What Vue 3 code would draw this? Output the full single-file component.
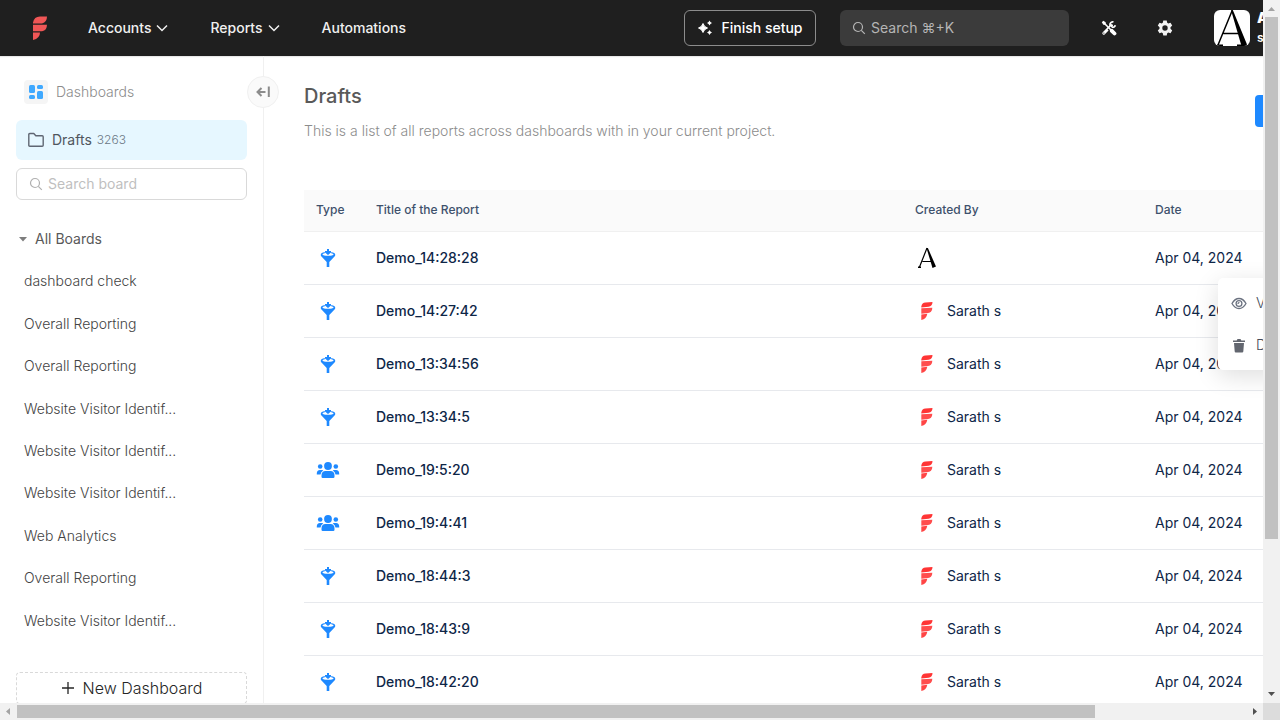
<script setup>
const boards = [
  'dashboard check',
  'Overall Reporting',
  'Overall Reporting',
  'Website Visitor Identif...',
  'Website Visitor Identif...',
  'Website Visitor Identif...',
  'Web Analytics',
  'Overall Reporting',
  'Website Visitor Identif...',
]

const reports = [
  { title: 'Demo_14:28:28', type: 'funnel', author: '' },
  { title: 'Demo_14:27:42', type: 'funnel', author: 'Sarath s' },
  { title: 'Demo_13:34:56', type: 'funnel', author: 'Sarath s' },
  { title: 'Demo_13:34:5', type: 'funnel', author: 'Sarath s' },
  { title: 'Demo_19:5:20', type: 'users', author: 'Sarath s' },
  { title: 'Demo_19:4:41', type: 'users', author: 'Sarath s' },
  { title: 'Demo_18:44:3', type: 'funnel', author: 'Sarath s' },
  { title: 'Demo_18:43:9', type: 'funnel', author: 'Sarath s' },
  { title: 'Demo_18:42:20', type: 'funnel', author: 'Sarath s' },
]
</script>

<template>
  <div class="window">
    <div class="viewport">
      <div class="page">
        <header class="topbar">
          <a class="brand" href="#" aria-label="Home">
            <svg width="14" height="24" viewBox="0 0 14 24" fill="#f05656">
              <path d="M0 7.500V6.500Q1 .5 7 .5h7q0 5.500-5 7z" />
              <path d="M0 8.700h14q0 5.500-5 6.600H0z" />
              <path d="M0 16.500h7q0 6-7 7.500z" />
            </svg>
          </a>
          <nav class="nav">
            <button class="nav-item" type="button">
              Accounts
              <svg width="12" height="12" viewBox="0 0 12 12" fill="none" stroke="currentColor" stroke-width="1.500"><path d="M1 3.500 6 8.500 11 3.500" /></svg>
            </button>
            <button class="nav-item" type="button">
              Reports
              <svg width="12" height="12" viewBox="0 0 12 12" fill="none" stroke="currentColor" stroke-width="1.500"><path d="M1 3.500 6 8.500 11 3.500" /></svg>
            </button>
            <a class="nav-item" href="#">Automations</a>
          </nav>
          <div class="tools">
            <button class="setup" type="button">
              <svg width="16" height="16" viewBox="0 0 16 16" fill="#fff">
                <path d="M6 3.500Q7 7 10.500 8 7 9 6 12.500 5 9 1.500 8 5 7 6 3.500z" stroke="#fff" stroke-linejoin="round" />
                <path d="M12.500.5q.6 1.900 2.500 2.500-1.900.6-2.500 2.500-.6-1.900-2.500-2.500 1.900-.6 2.500-2.500zM12.500 10q.6 1.900 2.500 2.500-1.900.6-2.500 2.500-.6-1.900-2.500-2.500 1.900-.6 2.500-2.500z" />
              </svg>
              Finish setup
            </button>
            <button class="global-search" type="button">
              <svg width="14" height="14" viewBox="0 0 14 14" fill="none" stroke="currentColor" stroke-width="1.200"><circle cx="6" cy="6" r="4.500" /><path d="m9.300 9.300 3.500 3.500" /></svg>
              Search ⌘+K
            </button>
            <button class="icon-btn" type="button" aria-label="Tools">
              <svg width="16" height="16" viewBox="0 0 16 16" fill="none" stroke="#fff">
                <path d="M2.800 13.200 10.500 5.500" stroke-width="3" stroke-linecap="round" />
                <path d="M12.500 2a2.700 2.700 0 1 0 1.800 3.300" stroke-width="1.800" />
                <path d="m2.500 2.500 6.500 6.500" stroke-width="1.600" />
                <path d="M.8 2.300 2.300.8 4.700 2.300v2.400H2.300z" fill="#fff" stroke="none" />
                <path d="m8.300 11.300 3-3" stroke="#1f1f1f" stroke-width="5" />
                <path d="m7 7 3.500 3.500" stroke-width="1.600" />
                <path d="m10.800 10.800 2.700 2.700" stroke-width="3.800" stroke-linecap="round" />
                <circle cx="2.900" cy="13.100" r=".6" fill="#1f1f1f" stroke="none" />
              </svg>
            </button>
            <button class="icon-btn" type="button" aria-label="Settings">
              <svg width="16" height="16" viewBox="0 0 16 16">
                <path fill="#f2f2f2" fill-rule="evenodd" d="M6.300.5h3.400l.5 2.200 1.100.7 2.200-.7 1.700 2.900-1.700 1.600v1.600l1.700 1.600-1.700 2.900-2.200-.7-1.100.7-.5 2.200H6.300l-.5-2.200-1.100-.7-2.200.7-1.700-2.900 1.700-1.600V7.200L.8 5.600l1.700-2.900 2.200.7 1.100-.7zM8 5.300a2.700 2.700 0 1 0 0 5.400 2.700 2.700 0 0 0 0-5.400z" />
              </svg>
            </button>
            <div class="account">
              <span class="avatar">
                <svg width="36" height="36" viewBox="0 0 36 36">
                  <path d="M18 1 4 35M9.500 23.500h17" fill="none" stroke="#000" stroke-width="1.500" />
                  <path d="M17 0h1.800L33 34.500 29 36h-1.500z" />
                  <path d="M3 34.500h6V36H3zM23 34.500h10V36H23z" />
                </svg>
              </span>
              <span class="account-text"><strong>A</strong><span>s</span></span>
            </div>
          </div>
        </header>

        <div class="body">
          <aside class="sidebar">
            <button class="collapse" type="button" aria-label="Collapse sidebar">
              <svg width="16" height="16" viewBox="0 0 16 16" fill="none" stroke="#8c8c8c" stroke-width="2"><path d="M10.500 8H2.500M6.500 4 2.500 8l4 4M13.800 2.500v10.500" /></svg>
            </button>
            <div class="side-title">
              <span class="side-icon">
                <svg width="14" height="14" viewBox="0 0 14 14" fill="#40a9ff"><rect width="6" height="8" rx="1.500" /><rect y="10" width="6" height="4" rx="1.500" /><rect x="8" width="6" height="4" rx="1.500" /><rect x="8" y="6" width="6" height="8" rx="1.500" /></svg>
              </span>
              Dashboards
            </div>
            <a class="drafts-link" href="#">
              <svg width="16" height="16" viewBox="0 0 16 16" fill="none" stroke="#5f6673" stroke-width="1.400" stroke-linejoin="round"><path d="M.8 2.500q0-1 1-1h4l2 2.300h6.400q1 0 1 1v8.400q0 1-1 1H1.800q-1 0-1-1z" /></svg>
              Drafts
              <span class="count">3263</span>
            </a>
            <label class="board-search">
              <svg width="14" height="14" viewBox="0 0 14 14" fill="none" stroke="#b0b0b0" stroke-width="1.200"><circle cx="6" cy="6" r="4.500" /><path d="m9.300 9.300 3.500 3.500" /></svg>
              <input type="text" placeholder="Search board" aria-label="Search board" />
            </label>
            <button class="group" type="button">
              <svg width="8" height="5" viewBox="0 0 8 5" fill="#7d7d7d"><path d="M0 0h8L4 4.500z" /></svg>
              All Boards
            </button>
            <nav class="boards">
              <a v-for="(board, i) in boards" :key="i" href="#">{{ board }}</a>
            </nav>
            <button class="new-board" type="button">
              <svg width="14" height="14" viewBox="0 0 14 14" fill="none" stroke="#262626" stroke-width="1.300"><path d="M7 1v12M1 7h12" /></svg>
              New Dashboard
            </button>
          </aside>

          <main class="main">
            <div class="heading">
              <div>
                <h1>Drafts</h1>
                <p>This is a list of all reports across dashboards with in your current project.</p>
              </div>
              <button class="primary" type="button" aria-label="New report"></button>
            </div>
            <div class="table-wrap">
              <table>
                <colgroup>
                  <col class="col-type" />
                  <col />
                  <col class="col-author" />
                  <col class="col-date" />
                </colgroup>
                <thead>
                  <tr>
                    <th>Type</th>
                    <th>Title of the Report</th>
                    <th>Created By</th>
                    <th>Date</th>
                  </tr>
                </thead>
                <tbody>
                  <tr v-for="report in reports" :key="report.title">
                    <td>
                      <svg v-if="report.type === 'funnel'" width="24" height="24" viewBox="0 0 24 24" fill="#1e89ff">
                        <path d="M11 3h2v2h2v1.500L12 9 9 6.500V5h2z" />
                        <path d="M8.800 6Q4.800 6.600 4.800 8.500v.8q0 .7.700 1.300L10.700 16v5h2.600v-5l5.200-5.400q.7-.6.700-1.300v-.8q0-1.900-4-2.500v1.300q2.400.5 2.400 1.200Q17 9.800 12 9.800T6.400 8.500q0-.7 2.400-1.200z" />
                      </svg>
                      <svg v-else width="24" height="24" viewBox="0 0 24 24" fill="#1e89ff">
                        <circle cx="12" cy="8" r="3.900" /><circle cx="4.200" cy="8.500" r="2.300" /><circle cx="19.800" cy="8.500" r="2.300" />
                        <path d="M5.500 18.800v-1.300q0-4.500 4-4.500h5q4 0 4 4.500v1.300q0 1.200-1.200 1.200H6.700q-1.200 0-1.200-1.200zM.8 16.500v-1Q.8 12 4 12h2.200q.6 0 1 .5-2.400 1.500-2.700 4zM23.200 16.500v-1q0-3.500-3.200-3.500h-2.200q-.6 0-1 .5 2.400 1.500 2.700 4z" />
                      </svg>
                    </td>
                    <td class="title">{{ report.title }}</td>
                    <td>
                      <span class="author">
                        <svg v-if="report.author" width="24" height="24" viewBox="0 0 24 24">
                          <path fill="#ff3535" d="M6.300 8.500V7.500Q7 3.500 10.500 3.500L17.500 3q0 4-4 4.700z" />
                          <path fill="#ff4d4d" d="m6.300 9.300 11-.6q0 4.500-4.300 5.300l-6.700.8z" />
                          <path fill="#ff4545" d="m6.300 15.500 6-.8q-.8 5.300-6 6.300z" />
                        </svg>
                        <svg v-else width="24" height="24" viewBox="0 0 24 24">
                          <path d="M12 2 4.500 21M7.500 15.500h9" fill="none" stroke="#000" stroke-width="1.200" />
                          <path d="M11.500 2h1.400L21 20.500l-3.500 1.500z" />
                          <path d="M3 20.500h3V22H3z" />
                        </svg>
                        {{ report.author }}
                      </span>
                    </td>
                    <td>Apr 04, 2024</td>
                  </tr>
                </tbody>
              </table>
              <div class="menu">
                <button type="button">
                  <svg width="16" height="16" viewBox="0 0 16 16" fill="none" stroke="#6b7280" stroke-width="1.300"><path d="M1 8.500q2.800-5 7-5t7 5q-2.800 5-7 5t-7-5z" /><circle cx="8" cy="8.500" r="2.900" /><path d="M6.500 8.500Q8 8.500 8 7" /></svg>
                  View
                </button>
                <button type="button">
                  <svg width="16" height="16" viewBox="0 0 16 16" fill="#62666f"><path d="M2 3.500h3.700L6.500 2h3l.8 1.500H14V5H2zM3 6h10l-.7 8.500q-.1 1-1 1H4.700q-.9 0-1-1z" /></svg>
                  Delete
                </button>
              </div>
            </div>
          </main>
        </div>
      </div>
    </div>

    <div class="bar bar-y" aria-hidden="true">
      <svg width="17" height="17" viewBox="0 0 17 17" fill="#a3a3a3"><path d="M5 11h7L8.500 7z" /></svg>
      <div class="track"><div class="thumb"></div></div>
      <svg width="17" height="17" viewBox="0 0 17 17" fill="#505050"><path d="M5 6h7l-3.500 4z" /></svg>
    </div>
    <div class="bar bar-x" aria-hidden="true">
      <svg width="17" height="17" viewBox="0 0 17 17" fill="#a3a3a3"><path d="M10 5v7L6 8.500z" /></svg>
      <div class="track"><div class="thumb"></div></div>
      <svg width="17" height="17" viewBox="0 0 17 17" fill="#505050"><path d="M7 5v7l4-3.500z" /></svg>
    </div>
    <div class="corner"></div>
  </div>
</template>

<style>
body {
  margin: 0;
}
</style>

<style scoped>
* {
  box-sizing: border-box;
}
.window {
  display: grid;
  grid-template: minmax(0, 1fr) 17px / minmax(0, 1fr) 17px;
  height: 100vh;
  background: #fff;
  font-family: Inter, "Liberation Sans", sans-serif;
  font-size: 14px;
  line-height: 20px;
  color: #0e2647;
}
svg {
  display: block;
  flex: none;
}
button,
input {
  font: inherit;
  color: inherit;
  border: 0;
  background: none;
  padding: 0;
}
a {
  color: inherit;
  text-decoration: none;
}
.viewport {
  overflow: hidden;
}
.page {
  min-width: 1440px;
}

.topbar {
  display: flex;
  align-items: center;
  height: 56px;
  padding: 0 24px 0 33px;
  background: #1f1f1f;
  color: #f0f0f0;
  font-weight: 500;
  box-shadow: 0 1px 1px #e8e8e8;
}
.nav {
  display: flex;
  gap: 42px;
  margin-left: 41px;
}
.nav-item {
  display: flex;
  align-items: center;
  gap: 5px;
}
.tools {
  display: flex;
  align-items: center;
  margin-left: auto;
}
.setup {
  display: flex;
  align-items: center;
  justify-content: center;
  gap: 8px;
  width: 132px;
  height: 36px;
  border: 1px solid #8c8c8c;
  border-radius: 6px;
  color: #fff;
}
.global-search {
  display: flex;
  align-items: center;
  gap: 5px;
  width: 229px;
  height: 36px;
  margin: 0 32px 0 24px;
  padding: 0 12px;
  border-radius: 6px;
  background: #3b3b3b;
  color: #b5b5b5;
  font-weight: 400;
}
.icon-btn {
  margin-right: 40px;
}
.account {
  display: flex;
  align-items: center;
  gap: 7px;
  width: 202px;
  margin-left: 1px;
}
.avatar {
  flex: none;
  width: 36px;
  height: 36px;
  border-radius: 6px;
  background: #fff;
  overflow: hidden;
}
.account-text {
  display: flex;
  flex-direction: column;
  font-weight: 600;
  color: #fff;
}
.account-text span {
  font-size: 12px;
}

.body {
  display: flex;
}
.sidebar {
  position: relative;
  flex: none;
  display: flex;
  flex-direction: column;
  width: 264px;
  padding: 16px 16px 24px;
  border-right: 1px solid #f0f0f0;
}
.collapse {
  position: absolute;
  top: 20px;
  right: -16px;
  display: grid;
  place-items: center;
  width: 32px;
  height: 32px;
  border: 1px solid #f0f0f0;
  border-radius: 50%;
  background: #fafafa;
}
.side-title {
  display: flex;
  align-items: center;
  gap: 8px;
  height: 40px;
  padding: 0 8px;
  color: #8c8c8c;
  font-weight: 300;
}
.side-icon {
  display: grid;
  place-items: center;
  width: 24px;
  height: 24px;
  border-radius: 4px;
  background: #f5f5f5;
}
.drafts-link {
  display: flex;
  align-items: center;
  height: 40px;
  margin-top: 8px;
  padding: 0 12px;
  border-radius: 6px;
  background: #e6f7ff;
  color: #4f565e;
}
.drafts-link svg {
  margin-right: 8px;
}
.count {
  margin-left: 5px;
  font-size: 12px;
  font-weight: 300;
  color: #6b7785;
}
.board-search {
  display: flex;
  align-items: center;
  gap: 5px;
  height: 32px;
  margin-top: 8px;
  padding: 0 12px;
  border: 1px solid #d9d9d9;
  border-radius: 6px;
}
.board-search input {
  flex: 1;
  min-width: 0;
  outline: 0;
}
.board-search input::placeholder {
  color: #bfbfbf;
  opacity: 1;
}
.group {
  display: flex;
  align-items: center;
  gap: 8px;
  margin-top: 29px;
  padding: 0 3px;
  color: #595959;
}
.boards {
  display: grid;
  grid-auto-rows: 1fr;
  height: 382px;
  margin-top: 11px;
  padding: 0 8px;
  font-weight: 300;
  color: #434343;
}
.boards a {
  align-self: center;
}
.new-board {
  display: flex;
  align-items: center;
  justify-content: center;
  gap: 8px;
  height: 32px;
  margin-top: 30px;
  border: 1px dashed #d9d9d9;
  border-radius: 4px;
  font-size: 16px;
  font-weight: 300;
  color: #262626;
}

.main {
  flex: 1;
  min-width: 0;
  padding: 24px 40px;
}
.heading {
  display: flex;
  justify-content: space-between;
  align-items: flex-start;
}
h1 {
  margin: 0;
  font-size: 20px;
  line-height: 32px;
  font-weight: 500;
  color: #595959;
}
p {
  margin: 9px 0 0;
  font-weight: 300;
  color: #8c8c8c;
}
.primary {
  width: 145px;
  height: 32px;
  margin-top: 15px;
  border-radius: 4px;
  background: #1e89ff;
}
.table-wrap {
  position: relative;
  margin-top: 49px;
}
table {
  width: 100%;
  table-layout: fixed;
  border-collapse: separate;
  border-spacing: 0;
}
.col-type {
  width: 60px;
}
.col-author {
  width: 240px;
}
.col-date {
  width: 257px;
}
th,
td {
  padding: 0 12px;
  text-align: left;
}
th {
  height: 42px;
  padding-bottom: 2px;
  background: #fafafa;
  border-bottom: 1px solid #f0f0f0;
  font-size: 12px;
  font-weight: 500;
  color: #3e516c;
}
td {
  height: 53px;
  border-bottom: 1px solid #e7e9ed;
}
.title {
  font-weight: 500;
}
.author {
  display: flex;
  align-items: center;
  gap: 8px;
}
.menu {
  position: absolute;
  top: 88px;
  right: 22px;
  display: flex;
  flex-direction: column;
  width: 160px;
  padding: 4px 0;
  border-radius: 5px;
  background: #fff;
  box-shadow: 0 6px 24px #0002;
  font-weight: 300;
  color: #434b5a;
}
.menu button {
  display: flex;
  align-items: center;
  gap: 9px;
  height: 42px;
  padding: 0 13px;
}

.bar {
  display: flex;
  background: #f1f1f1;
}
.bar-y {
  flex-direction: column;
}
.track {
  flex: 1;
}
.thumb {
  background: #c1c1c1;
}
.bar-y .track {
  padding: 0 2px;
}
.bar-y .thumb {
  height: 78%;
}
.bar-x .track {
  padding: 2px 0;
}
.bar-x .thumb {
  width: 87.7%;
  height: 100%;
}
.corner {
  background: #dcdcdc;
}
</style>
